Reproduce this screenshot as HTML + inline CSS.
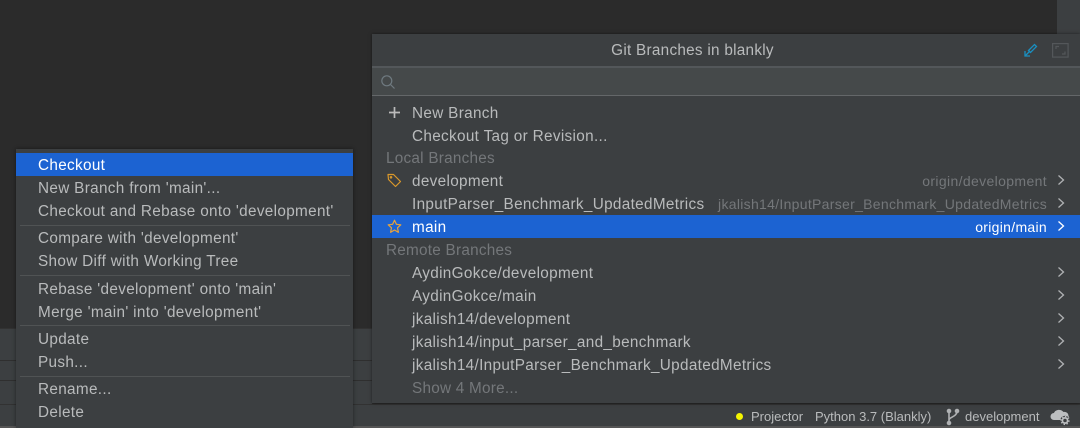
<!DOCTYPE html>
<html><head><meta charset="utf-8">
<style>
html,body{margin:0;padding:0;width:1080px;height:428px;overflow:hidden;background:#2b2b2b}
body{position:relative;font-family:"Liberation Sans",sans-serif;font-size:15.3px;color:#b9bbbc}
.a{position:absolute}
.t{position:absolute;white-space:nowrap;line-height:23px;height:23px;letter-spacing:.33px}
.g{color:#74777a;letter-spacing:.25px}
.w{color:#fff}
.p{margin-top:1px}
.r{text-align:right;font-size:14px;letter-spacing:.3px}
.s{font-size:13px;letter-spacing:0}
.sep{position:absolute;height:1px;background:#505354}
svg{position:absolute;overflow:visible}
</style></head>
<body>
<!-- backdrop -->
<div class="a" style="left:1057px;top:0;width:23px;height:34px;background:#3c3f41"></div>
<div class="a" style="left:0;top:329px;width:372px;height:99px;background:#3c3f41"></div>
<div class="a" style="left:0;top:328px;width:372px;height:1px;background:#323232"></div>
<div class="a" style="left:0;top:360px;width:372px;height:1px;background:#2f2f2f"></div>
<div class="a" style="left:0;top:380px;width:372px;height:1px;background:#2f2f2f"></div>
<div class="a" style="left:0;top:404px;width:1080px;height:1px;background:#323232"></div>
<div class="a" style="left:0;top:405px;width:1080px;height:21px;background:#3c3f41"></div>
<div class="a" style="left:0;top:426px;width:1080px;height:2px;background:#555"></div>

<!-- branches popup -->
<div class="a" style="left:372px;top:34px;width:708px;height:369px;background:#3c3f41;box-shadow:0 0 3px rgba(0,0,0,.5)"></div>
<div class="t p" style="left:372px;width:641px;top:38px;text-align:center;letter-spacing:.27px">Git Branches in blankly</div>
<svg style="left:1024px;top:43px" width="14" height="14" viewBox="0 0 14 14" fill="none" stroke="#1a8fc0" stroke-width="1.3">
<path d="M1 8v5h5"/><path d="M1.5 12.5 L6 8"/><path d="M4.5 7.5 L10.5 1.5 L12.5 3.5 L6.5 9.5 Z"/></svg>
<svg style="left:1052px;top:43px" width="17" height="15" viewBox="0 0 17 15" fill="none" stroke="#54575a" stroke-width="1.2">
<rect x=".6" y=".6" width="15.5" height="13.5"/><path d="M4 6V3.5h3M13 8.5V11h-3"/></svg>
<div class="a" style="left:372px;top:66px;width:708px;height:2px;background:#53575a"></div>
<div class="a" style="left:372px;top:68px;width:708px;height:27px;background:#45494a"></div>
<div class="a" style="left:372px;top:95px;width:708px;height:1px;background:#646769"></div>
<svg style="left:380px;top:74px" width="16" height="16" viewBox="0 0 16 16" fill="none" stroke="#6f7a80" stroke-width="1.2">
<circle cx="6.8" cy="6.8" r="5"/><path d="M10.5 10.5L14.5 14.5"/></svg>

<div class="a" style="left:372px;top:215px;width:708px;height:23px;background:#1c63d2"></div>

<svg style="left:388px;top:106px" width="13" height="13" viewBox="0 0 13 13" stroke="#bbbbbb" stroke-width="1.7"><path d="M1 6.5h11M6.5 1v11"/></svg>
<div class="t p" style="left:412px;top:101px">New Branch</div>
<div class="t p" style="left:412px;top:124px">Checkout Tag or Revision...</div>
<div class="t g" style="left:386px;top:147px">Local Branches</div>
<svg style="left:387px;top:173px" width="15" height="15" viewBox="0 0 15 15" fill="none" stroke="#d9982b" stroke-width="1.2" stroke-linejoin="round">
<path d="M1 1.5h5.5l7 7-5 5-7-7z"/><circle cx="4" cy="4.3" r=".7"/></svg>
<div class="t" style="left:412px;top:170px">development</div>
<div class="t g r" style="right:33px;top:170px;letter-spacing:.36px">origin/development</div>
<div class="t" style="left:412px;top:193px">InputParser_Benchmark_UpdatedMetrics</div>
<div class="t g r" style="right:33px;top:193px;letter-spacing:.3px">jkalish14/InputParser_Benchmark_UpdatedMetrics</div>
<svg style="left:387px;top:219px" width="15" height="15" viewBox="0 0 15 15" fill="none" stroke="#e8a33a" stroke-width="1.2" stroke-linejoin="round">
<path d="M7.5 1.2l1.9 4.1 4.4.5-3.3 3 .9 4.5-3.9-2.3-3.9 2.3.9-4.5-3.3-3 4.4-.5z"/></svg>
<div class="t w" style="left:412px;top:216px">main</div>
<div class="t w r" style="right:33px;top:216px">origin/main</div>
<div class="t g" style="left:386px;top:239px">Remote Branches</div>
<div class="t" style="left:412px;top:262px">AydinGokce/development</div>
<div class="t" style="left:412px;top:285px">AydinGokce/main</div>
<div class="t" style="left:412px;top:308px">jkalish14/development</div>
<div class="t" style="left:412px;top:331px">jkalish14/input_parser_and_benchmark</div>
<div class="t" style="left:412px;top:354px">jkalish14/InputParser_Benchmark_UpdatedMetrics</div>
<div class="t g" style="left:412px;top:377px">Show 4 More...</div>

<svg style="left:1057px;top:-1px" width="10" height="400" fill="none" stroke="#afb1b3" stroke-width="1.3">
<path d="M1.5 176.5l5 4.500-5 4.500M1.500 199.500l5 4.500-5 4.500M1.500 268.500l5 4.500-5 4.500M1.500 291.500l5 4.500-5 4.500M1.500 314.500l5 4.500-5 4.500M1.500 337.500l5 4.500-5 4.500M1.500 360.500l5 4.500-5 4.500"/>
<path stroke="#fff" d="M1.500 222.500l5 4.500-5 4.500"/></svg>

<!-- status bar -->
<div class="a" style="left:736px;top:413px;width:7px;height:7px;border-radius:50%;background:#f5f500"></div>
<div class="t s" style="left:751px;top:405px">Projector</div>
<div class="t s" style="left:815px;top:405px">Python 3.7 (Blankly)</div>
<svg style="left:946px;top:408px" width="14" height="18" viewBox="0 0 14 18" fill="none" stroke="#afb1b3" stroke-width="1.6">
<circle cx="3" cy="3" r="1.500" fill="#afb1b3"/><circle cx="3" cy="15" r="1.500" fill="#afb1b3"/><circle cx="11" cy="3" r="1.500" fill="#afb1b3"/>
<path d="M3 3v12M3 12c0-3 8-3 8-9"/></svg>
<div class="t s" style="left:965px;top:405px">development</div>
<svg style="left:1050px;top:408px" width="22" height="18" viewBox="0 0 22 18">
<path d="M4 12a3.500 3.500 0 0 1 0-7c1-3.500 7-4.500 9.500-1 3-.5 5 1.500 5 4 1 1 1 3 0 4z" fill="#bcbec0"/>
<circle cx="15" cy="12.500" r="4.800" fill="#3c3f41"/>
<circle cx="15" cy="12.500" r="2.600" fill="none" stroke="#bcbec0" stroke-width="1.700"/>
<circle cx="15" cy="12.500" r="4" fill="none" stroke="#bcbec0" stroke-width="1.200" stroke-dasharray="1.500 1.600"/></svg>

<!-- context menu -->
<div class="a" style="left:16px;top:149px;width:337px;height:279px;background:#3c3f41;box-shadow:0 0 4px rgba(0,0,0,.45)"></div>
<div class="a" style="left:16px;top:153px;width:337px;height:23px;background:#1c63d2"></div>
<div class="t w" style="left:38px;top:154px">Checkout</div>
<div class="t" style="left:38px;top:177px">New Branch from 'main'...</div>
<div class="t" style="left:38px;top:200px">Checkout and Rebase onto 'development'</div>
<div class="sep" style="left:20px;width:330px;top:225px"></div>
<div class="t" style="left:38px;top:227px">Compare with 'development'</div>
<div class="t" style="left:38px;top:250px">Show Diff with Working Tree</div>
<div class="sep" style="left:20px;width:330px;top:275px"></div>
<div class="t" style="left:38px;top:278px">Rebase 'development' onto 'main'</div>
<div class="t" style="left:38px;top:301px">Merge 'main' into 'development'</div>
<div class="sep" style="left:20px;width:330px;top:325px"></div>
<div class="t" style="left:38px;top:328px">Update</div>
<div class="t" style="left:38px;top:351px">Push...</div>
<div class="sep" style="left:20px;width:330px;top:376px"></div>
<div class="t" style="left:38px;top:378px">Rename...</div>
<div class="t" style="left:38px;top:401px">Delete</div>
</body></html>
